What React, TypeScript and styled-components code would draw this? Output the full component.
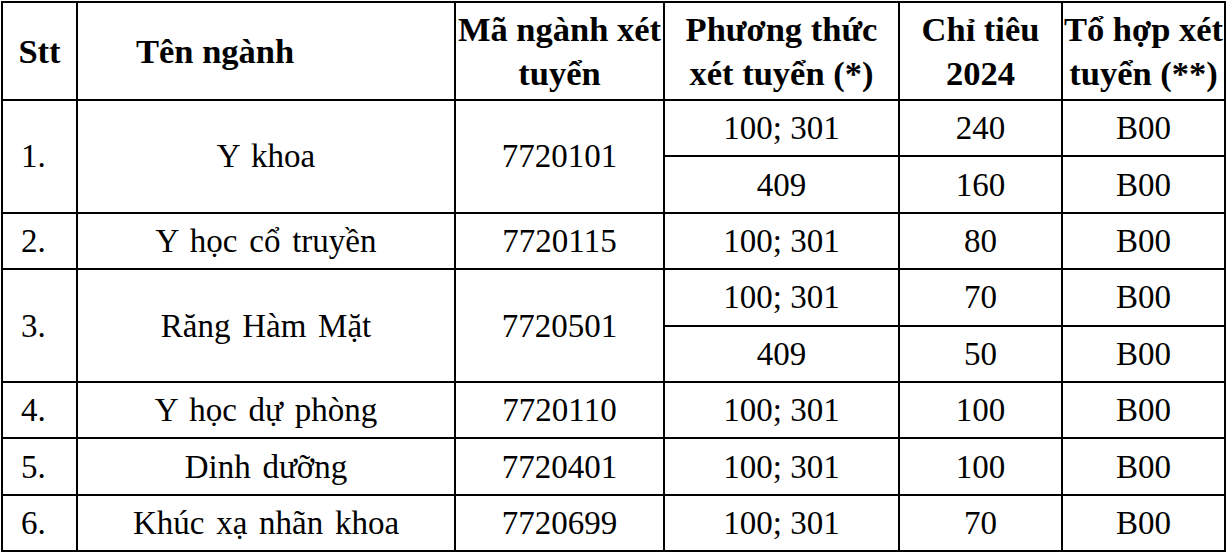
import React, { FC } from "react";
import styled, { createGlobalStyle } from "styled-components";

const GlobalStyle = createGlobalStyle`
  html, body {
    margin: 0;
    padding: 0;
    background: #ffffff;
  }
  body {
    font-family: "Liberation Serif", "Times New Roman", serif;
    color: #000000;
  }
`;

const Table = styled.table`
  border-collapse: collapse;
  table-layout: fixed;
  width: 1224px;
  margin: 1px 0 0 1px;
  font-family: "Liberation Serif", "Times New Roman", serif;
  font-size: 33px;
  color: #000;
`;

const HeadRow = styled.tr`
  height: 98px;
`;

const Row = styled.tr`
  height: 56.4px;
`;

const HeadCell = styled.th<{ $left?: boolean }>`
  border: 2.5px solid #000;
  font-weight: bold;
  font-size: 34.5px;
  line-height: 44px;
  padding: 0;
  white-space: nowrap;
  vertical-align: middle;
  text-align: ${({ $left }) => ($left ? "left" : "center")};
  padding-left: ${({ $left }) => ($left ? "58px" : "0")};
`;

const Cell = styled.td<{ $left?: boolean; $spaced?: boolean }>`
  border: 2.5px solid #000;
  font-weight: normal;
  line-height: 38px;
  padding: 0;
  white-space: nowrap;
  vertical-align: middle;
  text-align: ${({ $left }) => ($left ? "left" : "center")};
  padding-left: ${({ $left }) => ($left ? "18px" : "0")};
  word-spacing: ${({ $spaced }) => ($spaced ? "3.5px" : "0")};
`;

type Entry = { method: string; quota: string };
type Major = { stt: string; name: string; code: string; entries: Entry[] };

const majors: Major[] = [
  {
    stt: "1.",
    name: "Y khoa",
    code: "7720101",
    entries: [
      { method: "100; 301", quota: "240" },
      { method: "409", quota: "160" },
    ],
  },
  {
    stt: "2.",
    name: "Y học cổ truyền",
    code: "7720115",
    entries: [{ method: "100; 301", quota: "80" }],
  },
  {
    stt: "3.",
    name: "Răng Hàm Mặt",
    code: "7720501",
    entries: [
      { method: "100; 301", quota: "70" },
      { method: "409", quota: "50" },
    ],
  },
  {
    stt: "4.",
    name: "Y học dự phòng",
    code: "7720110",
    entries: [{ method: "100; 301", quota: "100" }],
  },
  {
    stt: "5.",
    name: "Dinh dưỡng",
    code: "7720401",
    entries: [{ method: "100; 301", quota: "100" }],
  },
  {
    stt: "6.",
    name: "Khúc xạ nhãn khoa",
    code: "7720699",
    entries: [{ method: "100; 301", quota: "70" }],
  },
];

const MajorRows: FC<{ major: Major }> = ({ major }) => {
  const span = major.entries.length;
  return (
    <>
      {major.entries.map((e, i) => (
        <Row key={i}>
          {i === 0 && (
            <>
              <Cell $left rowSpan={span}>
                {major.stt}
              </Cell>
              <Cell $spaced rowSpan={span}>
                {major.name}
              </Cell>
              <Cell rowSpan={span}>{major.code}</Cell>
            </>
          )}
          <Cell>{e.method}</Cell>
          <Cell>{e.quota}</Cell>
          <Cell>B00</Cell>
        </Row>
      ))}
    </>
  );
};

const App: FC = () => (
  <>
    <GlobalStyle />
    <Table>
      <colgroup>
        <col style={{ width: 75 }} />
        <col style={{ width: 378 }} />
        <col style={{ width: 209 }} />
        <col style={{ width: 235 }} />
        <col style={{ width: 163 }} />
        <col style={{ width: 163 }} />
      </colgroup>
      <thead>
        <HeadRow>
          <HeadCell>Stt</HeadCell>
          <HeadCell $left>Tên ngành</HeadCell>
          <HeadCell>
            Mã ngành xét
            <br />
            tuyển
          </HeadCell>
          <HeadCell>
            Phương thức
            <br />
            xét tuyển (*)
          </HeadCell>
          <HeadCell>
            Chỉ tiêu
            <br />
            2024
          </HeadCell>
          <HeadCell>
            Tổ hợp xét
            <br />
            tuyển (**)
          </HeadCell>
        </HeadRow>
      </thead>
      <tbody>
        {majors.map((m) => (
          <MajorRows key={m.stt} major={m} />
        ))}
      </tbody>
    </Table>
  </>
);

export default App;
